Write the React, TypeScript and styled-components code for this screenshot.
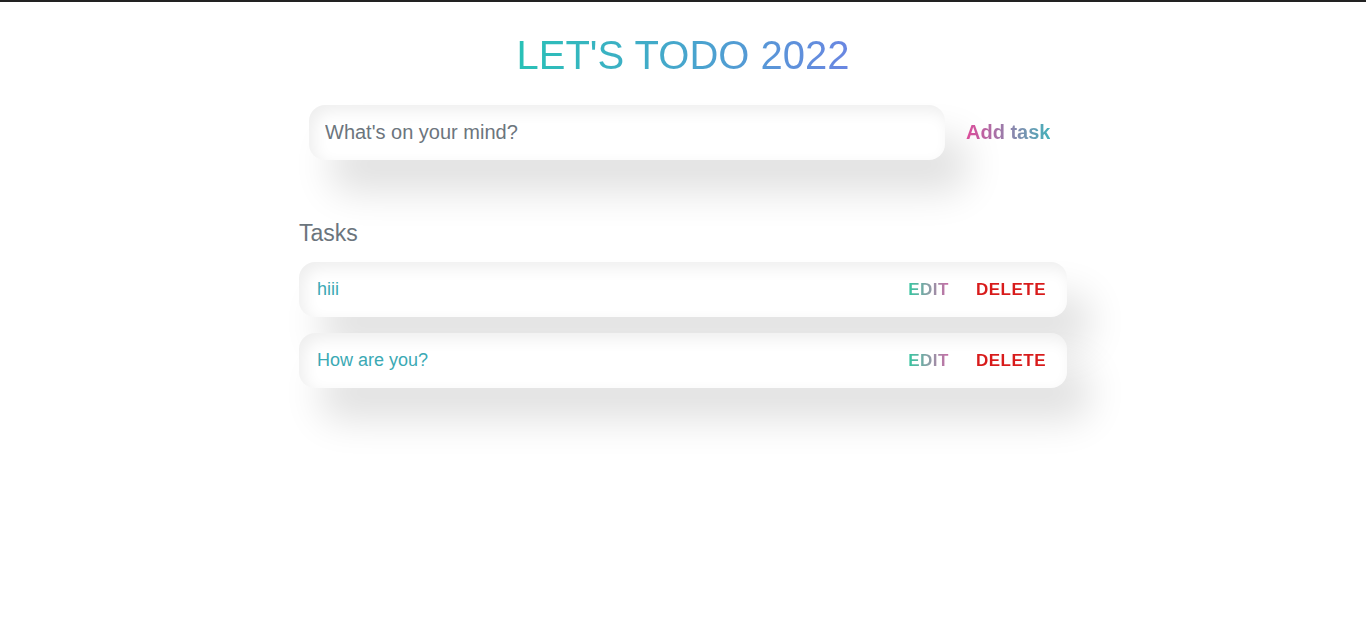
import React from "react";
import styled, { createGlobalStyle } from "styled-components";

const Global = createGlobalStyle`
  html, body { margin: 0; padding: 0; background: #fff; }
  body {
    border-top: 2px solid #222;
    min-height: 600px;
    font-family: "Liberation Sans", Arial, sans-serif;
  }
`;

const Page = styled.main`
  width: 768px;
  margin: 0 auto;
  padding: 30px 0 120px;
  display: flex;
  flex-direction: column;
`;

const Title = styled.h1`
  margin: 0 0 27px;
  text-align: center;
  font-size: 40px;
  font-weight: 400;
  line-height: 46px;
  background: linear-gradient(90deg, #29c1b6 0%, #4aa3cf 55%, #6a86e2 100%);
  -webkit-background-clip: text;
  background-clip: text;
  color: transparent;
  align-self: center;
`;

const Form = styled.form`
  display: flex;
  align-items: center;
  padding-left: 10px;
  margin-bottom: 60px;
`;

const shadow = `inset 5px 6px 16px rgba(0, 0, 0, 0.07),
    22px 32px 38px rgba(0, 0, 0, 0.12)`;

const Input = styled.input`
  width: 636px;
  height: 55px;
  box-sizing: border-box;
  border: none;
  outline: none;
  border-radius: 16px;
  padding: 0 16px;
  font-family: "Liberation Sans", Arial, sans-serif;
  font-size: 20px;
  color: #6c757d;
  background: #fff;
  box-shadow: ${shadow};
  &::placeholder { color: #6c757d; }
`;

const AddButton = styled.button`
  margin-left: 21px;
  border: none;
  padding: 0;
  background: linear-gradient(90deg, #dd4c9a 0%, #8b86ad 55%, #45b0ba 100%);
  -webkit-background-clip: text;
  background-clip: text;
  color: transparent;
  font-family: "Liberation Sans", Arial, sans-serif;
  font-size: 20px;
  font-weight: 700;
  cursor: pointer;
`;

const Heading = styled.h2`
  margin: 0 0 16px;
  font-size: 23px;
  font-weight: 400;
  line-height: 26px;
  color: #6c757d;
`;

const List = styled.ul`
  list-style: none;
  margin: 0;
  padding: 0;
  display: flex;
  flex-direction: column;
  gap: 16px;
`;

const Card = styled.li`
  height: 55px;
  box-sizing: border-box;
  display: flex;
  align-items: center;
  padding: 0 21px 0 18px;
  border-radius: 16px;
  background: #fff;
  box-shadow: ${shadow};
`;

const TaskText = styled.span`
  flex: 1;
  font-size: 18px;
  color: #3ba9b4;
`;

const Action = styled.button<{ $variant: "edit" | "delete" }>`
  border: none;
  padding: 0;
  margin-left: ${(p) => (p.$variant === "delete" ? "27px" : "0")};
  font-family: "Liberation Sans", Arial, sans-serif;
  font-size: 17px;
  font-weight: 700;
  letter-spacing: 0.5px;
  cursor: pointer;
  background: ${(p) =>
    p.$variant === "edit"
      ? "linear-gradient(90deg, #33c7a0 0%, #8a9fa6 50%, #c86aa6 100%)"
      : "#d81b1b"};
  -webkit-background-clip: text;
  background-clip: text;
  color: transparent;
`;

const tasks = ["hiii", "How are you?"];

export default function App() {
  return (
    <>
      <Global />
      <Page>
        <Title>LET'S TODO 2022</Title>
        <Form onSubmit={(e) => e.preventDefault()}>
          <Input placeholder="What's on your mind?" />
          <AddButton type="submit">Add task</AddButton>
        </Form>
        <Heading>Tasks</Heading>
        <List>
          {tasks.map((t) => (
            <Card key={t}>
              <TaskText>{t}</TaskText>
              <Action $variant="edit">EDIT</Action>
              <Action $variant="delete">DELETE</Action>
            </Card>
          ))}
        </List>
      </Page>
    </>
  );
}
